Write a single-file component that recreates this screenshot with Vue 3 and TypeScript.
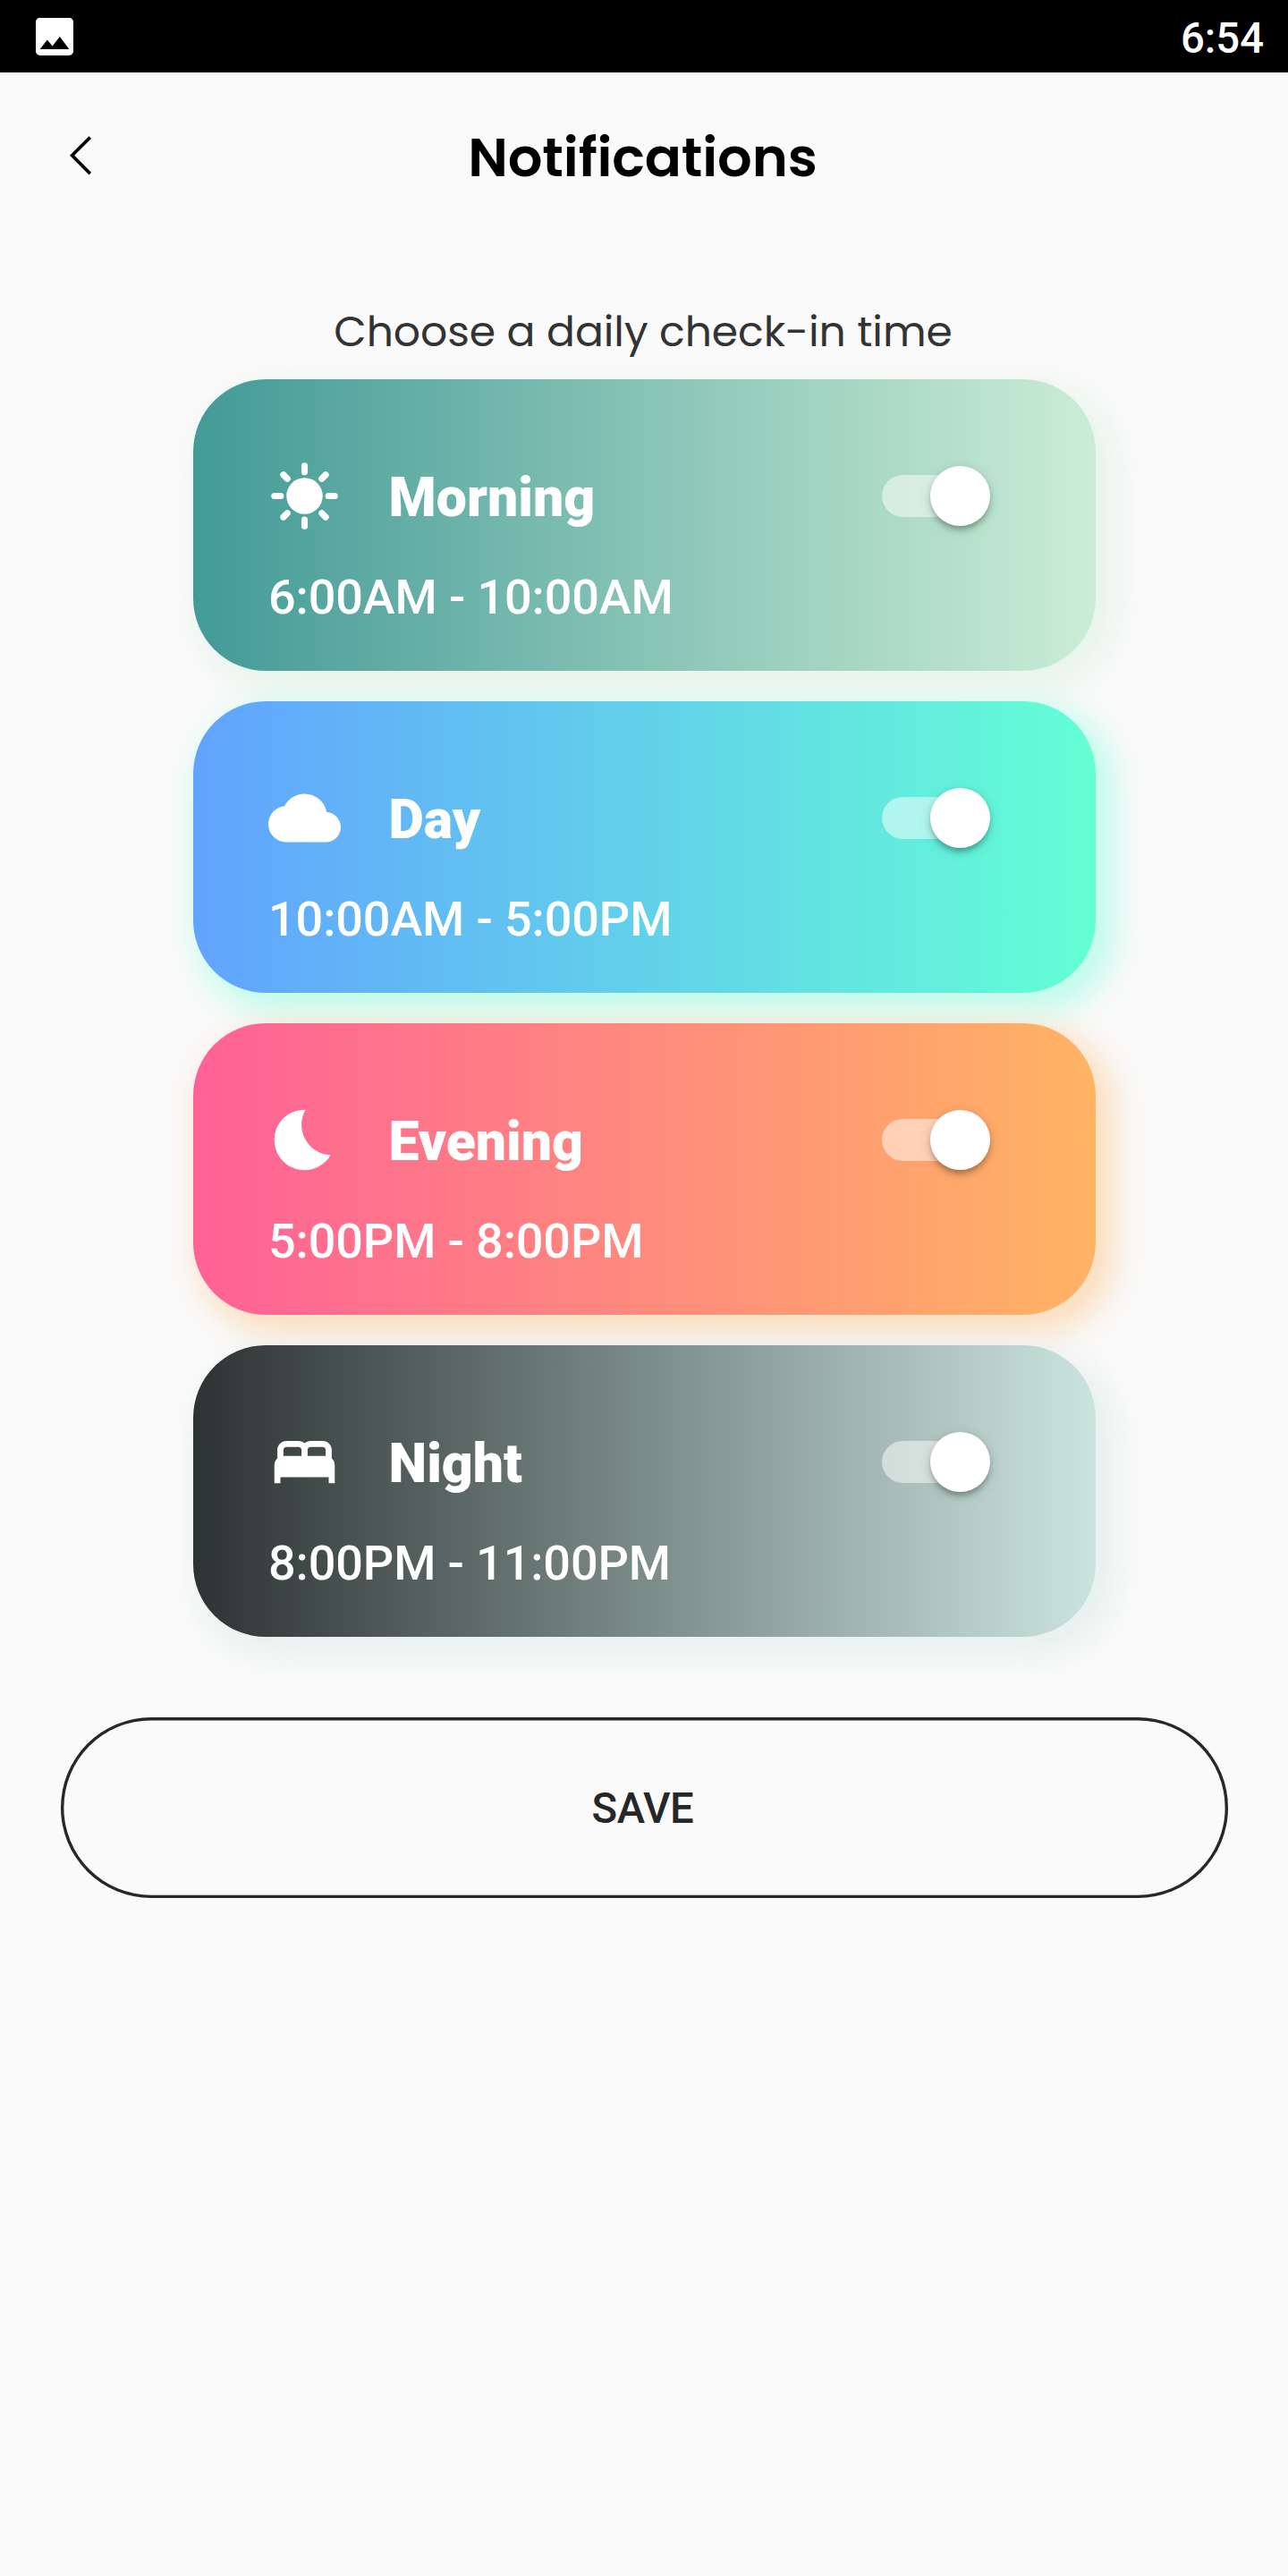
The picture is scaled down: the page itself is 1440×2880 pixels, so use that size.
<script setup lang="ts">
import { ref } from 'vue'

type IconName = 'sun' | 'cloud' | 'moon' | 'bed'

interface Slot {
  key: string
  title: string
  range: string
  icon: IconName
  enabled: boolean
}

const slots = ref<Slot[]>([
  { key: 'morning', title: 'Morning', range: '6:00AM - 10:00AM', icon: 'sun', enabled: true },
  { key: 'day', title: 'Day', range: '10:00AM - 5:00PM', icon: 'cloud', enabled: true },
  { key: 'evening', title: 'Evening', range: '5:00PM - 8:00PM', icon: 'moon', enabled: true },
  { key: 'night', title: 'Night', range: '8:00PM - 11:00PM', icon: 'bed', enabled: true },
])

const icons: Record<Exclude<IconName, 'sun'>, string> = {
  cloud:
    'M19.35 10.04C18.67 6.59 15.64 4 12 4 9.11 4 6.6 5.64 5.35 8.04 2.34 8.36 0 10.91 0 14c0 3.31 2.69 6 6 6h13c2.76 0 5-2.24 5-5 0-2.64-2.05-4.78-4.65-4.96z',
  moon: 'M12.34 2.02C6.59 1.82 2 6.42 2 12c0 5.52 4.48 10 10 10 3.71 0 6.93-2.02 8.66-5.02-7.51-.25-12.09-8.43-8.32-14.96z',
  bed: 'M21 10.78V8c0-1.65-1.35-3-3-3h-4c-.77 0-1.47.3-2 .78C11.47 5.3 10.77 5 10 5H6C4.35 5 3 6.35 3 8v2.78C2.39 11.33 2 12.12 2 13v6h2v-2h16v2h2v-6c0-.88-.39-1.67-1-2.22zM14 7h4c.55 0 1 .45 1 1v2h-6V8c0-.55.45-1 1-1zM5 8c0-.55.45-1 1-1h4c.55 0 1 .45 1 1v2H5V8z',
}

function toggle(slot: Slot) {
  slot.enabled = !slot.enabled
}
</script>

<template>
  <div class="screen">
    <div class="status">
      <svg class="status-icon" viewBox="0 0 24 24" fill="#fff">
        <path d="M21 19V5c0-1.1-.9-2-2-2H5c-1.1 0-2 .9-2 2v14c0 1.1.9 2 2 2h14c1.1 0 2-.9 2-2zM8.5 13.5l2.5 3.01L14.5 12l4.5 6H5l3.5-4.5z" />
      </svg>
      <span class="clock">6:54</span>
    </div>

    <header class="header">
      <button class="back" aria-label="Back">
        <svg viewBox="0 0 24 44" width="24" height="44" fill="none" stroke="#000" stroke-width="3.7">
          <path d="M22.8 1.6 2.6 21.8 22.8 42.2" />
        </svg>
      </button>
      <h1 class="title">Notifications</h1>
    </header>

    <p class="prompt">Choose a daily check-in time</p>

    <main class="cards">
      <section v-for="slot in slots" :key="slot.key" class="card" :class="slot.key">
        <div class="row">
          <svg class="icon" viewBox="0 0 24 24" fill="#fff">
            <g v-if="slot.icon === 'sun'">
              <circle cx="12" cy="12" r="6" />
              <path
                d="M12 2v2.1M12 19.9V22M2 12h2.1M19.9 12H22M5 5l1.3 1.3M17.7 17.7 19 19M19 5l-1.3 1.3M6.3 17.7 5 19"
                stroke="#fff"
                stroke-width="2.1"
                stroke-linecap="round"
              />
            </g>
            <path v-else :d="icons[slot.icon]" />
          </svg>
          <h2 class="name">{{ slot.title }}</h2>
          <button class="switch" :class="{ on: slot.enabled }" role="switch" :aria-checked="slot.enabled" @click="toggle(slot)">
            <span class="thumb"></span>
          </button>
        </div>
        <p class="range">{{ slot.range }}</p>
      </section>
    </main>

    <button class="save">SAVE</button>
  </div>
</template>

<style>
body {
  margin: 0;
  background: #fafafa;
}
</style>

<style scoped>
.screen {
  display: flex;
  flex-direction: column;
  width: 1440px;
  height: 2880px;
  overflow: hidden;
  background: #fafafa;
  font-family: Roboto, sans-serif;
}

h1,
h2,
p {
  margin: 0;
}

button {
  border: 0;
  padding: 0;
  background: none;
  font-family: inherit;
}

.status {
  box-sizing: border-box;
  display: flex;
  align-items: center;
  justify-content: space-between;
  height: 81px;
  padding: 0 27px 0 33px;
  background: #000;
}

.status-icon {
  width: 56px;
  height: 56px;
}

.clock {
  padding-top: 5px;
  color: #fff;
  font-size: 47.25px;
  font-weight: 500;
  line-height: 56px;
}

.header {
  display: grid;
  grid-template-columns: 180px 1fr 180px;
  align-items: center;
  height: 189px;
}

.back {
  display: flex;
  margin-top: -4px;
  padding-left: 78px;
}

.title {
  padding-right: 3px;
  color: #000;
  font-family: Poppins, Inter, sans-serif;
  font-size: 60.75px;
  font-weight: 600;
  line-height: 80px;
  letter-spacing: -0.1px;
  text-align: center;
  white-space: nowrap;
}

.prompt {
  margin-top: 65px;
  padding-right: 2px;
  color: #333;
  font-family: Poppins, Inter, sans-serif;
  font-size: 47.25px;
  line-height: 71px;
  letter-spacing: -0.06px;
  text-align: center;
  white-space: nowrap;
}

.cards {
  display: flex;
  flex-direction: column;
  gap: 34px;
  width: 1009px;
  margin: 17.7px 0 0 216px;
}

.card {
  box-sizing: border-box;
  height: 326px;
  padding: 90.5px 84px 0;
  border-radius: 81px;
  color: #fff;
}

.morning {
  background: linear-gradient(90deg, #439a97, #cbedd5);
  box-shadow: 13.5px 13.5px 34.6px 6.75px rgba(203, 237, 213, 0.4);
}

.day {
  background: linear-gradient(90deg, #61a3fe, #63ffd5);
  box-shadow: 13.5px 13.5px 34.6px 6.75px rgba(99, 255, 213, 0.4);
}

.evening {
  background: linear-gradient(90deg, #fe6197, #ffb463);
  box-shadow: 13.5px 13.5px 34.6px 6.75px rgba(255, 180, 99, 0.4);
}

.night {
  background: linear-gradient(90deg, #2c3333, #cbe4de);
  box-shadow: 13.5px 13.5px 34.6px 6.75px rgba(203, 228, 222, 0.4);
}

.row {
  display: flex;
  align-items: center;
  height: 81px;
}

.icon {
  width: 81px;
  height: 81px;
}

.name {
  flex: 1;
  margin-left: 53.5px;
  padding-top: 4px;
  font-size: 60.75px;
  font-weight: 900;
  line-height: 72px;
}

.switch {
  position: relative;
  width: 111.4px;
  height: 47.25px;
  margin-right: 43.6px;
  border-radius: 24px;
  background: rgba(255, 255, 255, 0.5);
}

.thumb {
  position: absolute;
  top: -10.1px;
  left: -10px;
  width: 67.5px;
  height: 67.5px;
  border-radius: 50%;
  background: #fff;
  box-shadow:
    0 6.75px 7.3px -3.375px rgba(0, 0, 0, 0.2),
    0 3.375px 7.3px rgba(0, 0, 0, 0.14),
    0 3.375px 15px rgba(0, 0, 0, 0.12);
}

.switch.on .thumb {
  left: 53.7px;
}

.range {
  margin-top: 41px;
  font-size: 54px;
  font-weight: 500;
  line-height: 64px;
  letter-spacing: -0.12px;
  white-space: nowrap;
}

.save {
  box-sizing: border-box;
  width: 1305px;
  height: 202px;
  margin: 90px 0 0 67.5px;
  padding: 2px 3px 0 0;
  border-radius: 101px;
  box-shadow: inset 0 0 0 3.375px #272727;
  color: #272727;
  font-size: 47.25px;
  font-weight: 500;
  line-height: 56px;
  letter-spacing: -0.3px;
}
</style>
